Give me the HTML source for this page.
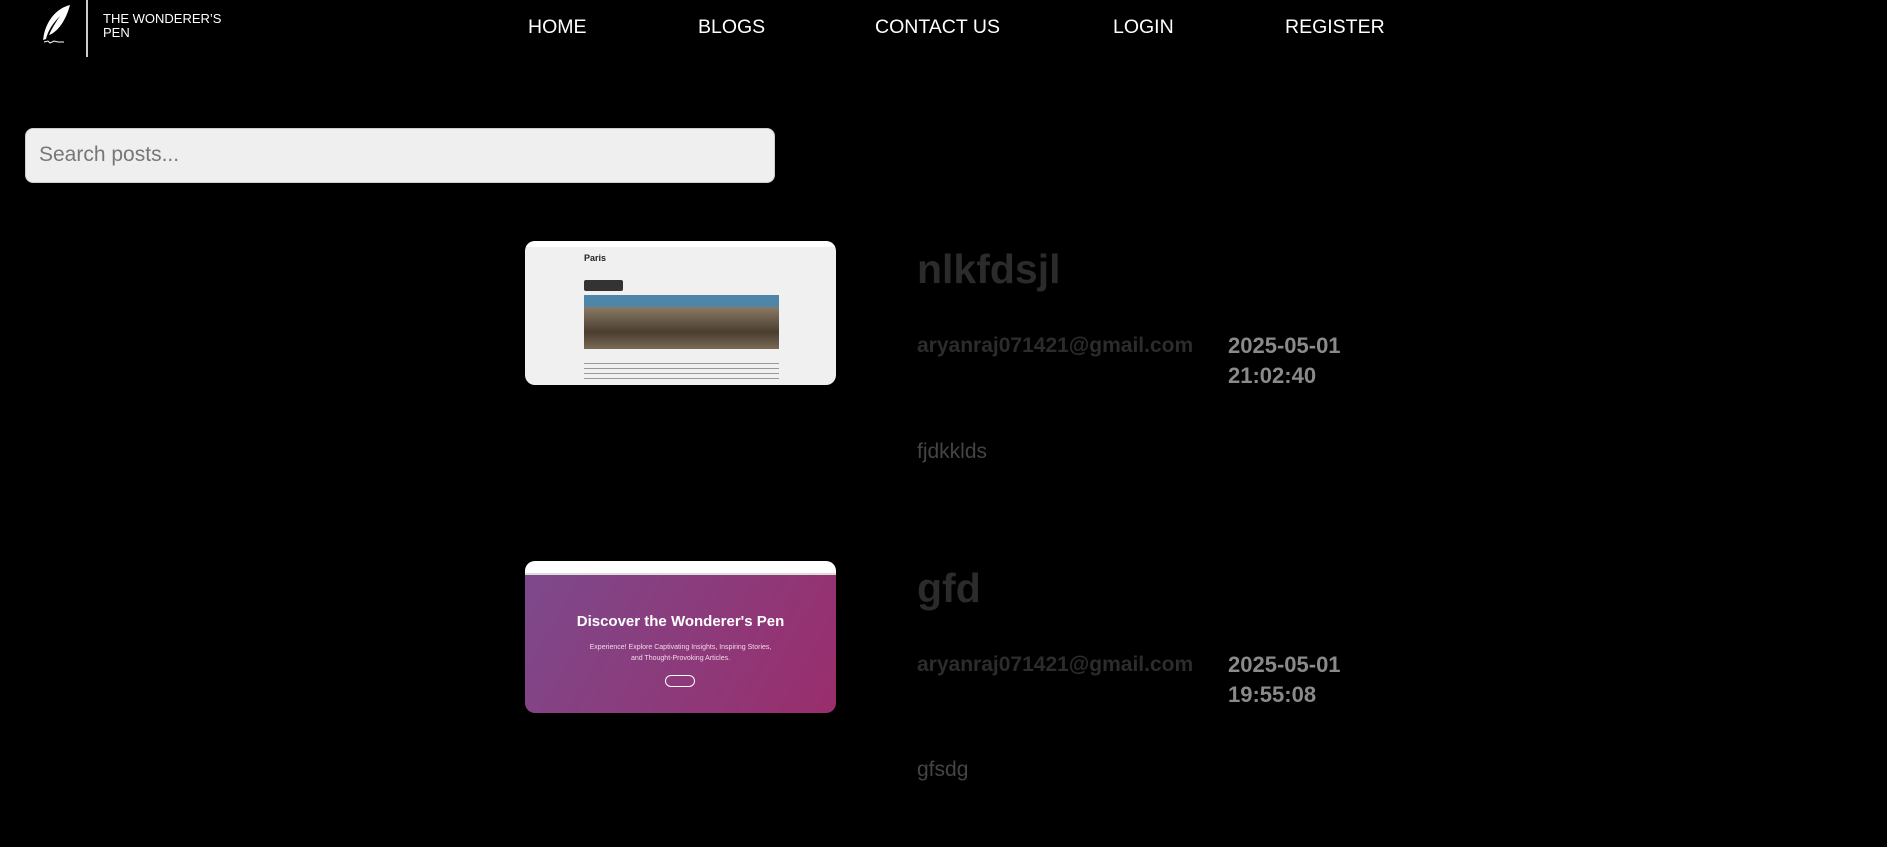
<!DOCTYPE html>
<html><head><meta charset="utf-8"><style>
*{margin:0;padding:0;box-sizing:border-box}
body{width:1887px;height:847px;background:#000;font-family:"Liberation Sans",sans-serif;position:relative;overflow:hidden}
.abs{position:absolute;white-space:nowrap}
.nav{color:#fff;font-size:19.5px;top:16px}
.thumb{position:absolute;left:525px;width:311px;border-radius:10px;overflow:hidden;background:#f0f0f0}
.title{color:#2b2b2b;font-size:41px;font-weight:bold;left:917px}
.email{color:#2c2c2c;font-size:21px;font-weight:bold;left:917px}
.date{color:#8a8a8a;font-size:22px;font-weight:bold;left:1228px;line-height:30px}
.desc{color:#444;font-size:21px;left:917px}
</style></head><body>
<svg class="abs" style="left:38px;top:4px" width="36" height="42" viewBox="0 0 36 42">
<path d="M32 1 C20 4 10 14 6 30 L5 36 L8 35 C10 26 16 18 22 12 C18 18 14 24 11 31 C20 28 28 16 32 1Z" fill="#fff"/>
<path d="M6 38 L10 37 L12 39 L16 37 L20 38 L26 38" stroke="#fff" stroke-width="1" fill="none"/>
</svg>
<div class="abs" style="left:86px;top:0;width:2px;height:57px;background:#ccc"></div>
<div class="abs" style="left:103px;top:12px;color:#fff;font-size:13px;line-height:14px">THE WONDERER’S<br>PEN</div>
<div class="abs nav" style="left:528px">HOME</div>
<div class="abs nav" style="left:698px">BLOGS</div>
<div class="abs nav" style="left:875px">CONTACT US</div>
<div class="abs nav" style="left:1113px">LOGIN</div>
<div class="abs nav" style="left:1285px">REGISTER</div>
<div class="abs" style="left:25px;top:128px;width:750px;height:55px;background:#efefef;border-radius:8px;border:1px solid #ccc"></div>
<div class="abs" style="left:39px;top:143px;color:#777;font-size:21px">Search posts...</div>

<div class="thumb" style="top:241px;height:144px">
 <div style="height:6px;background:#fff"></div>
 <div style="position:absolute;left:59px;top:12px;font-size:9px;font-weight:bold;color:#222">Paris</div>
 <div style="position:absolute;left:59px;top:39px;width:39px;height:11px;background:#333;border-radius:2px"></div>
 <div style="position:absolute;left:59px;top:54px;width:195px;height:20px;background:#4d86a8"></div>
 <div style="position:absolute;left:59px;top:66px;width:195px;height:42px;background:linear-gradient(#8a7a66,#4a3e30 60%,#7a6a55)"></div>
 <div style="position:absolute;left:59px;top:120px;width:195px;height:20px;background:repeating-linear-gradient(#f0f0f0 0 2px,#999 2px 3px,#f0f0f0 3px 5px)"></div>
</div>

<div class="abs title" style="top:246px">nlkfdsjl</div>
<div class="abs email" style="top:334px">aryanraj071421@gmail.com</div>
<div class="abs date" style="top:331px">2025-05-01<br>21:02:40</div>
<div class="abs desc" style="top:440px">fjdkklds</div>

<div class="thumb" style="top:561px;height:152px;background:linear-gradient(120deg,#7c4a8c,#9a2d6c)">
 <div style="height:14px;background:#fff;border-bottom:2px solid #ddd"></div>
 <div style="position:absolute;left:0;width:311px;top:52px;text-align:center;color:#fff;font-weight:bold;font-size:15px">Discover the Wonderer's Pen</div>
 <div style="position:absolute;left:0;width:311px;top:81px;text-align:center;color:#f3d8ea;font-size:7px;line-height:11px">Experience! Explore Captivating Insights, Inspiring Stories,<br>and Thought-Provoking Articles.</div>
 <div style="position:absolute;left:140px;top:114px;width:30px;height:12px;border:1px solid #fff;border-radius:6px"></div>
</div>

<div class="abs title" style="top:565px">gfd</div>
<div class="abs email" style="top:653px">aryanraj071421@gmail.com</div>
<div class="abs date" style="top:650px">2025-05-01<br>19:55:08</div>
<div class="abs desc" style="top:758px">gfsdg</div>
</body></html>
